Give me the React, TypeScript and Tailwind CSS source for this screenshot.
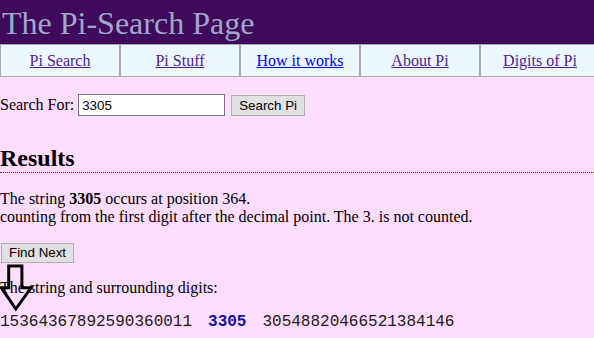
import React from 'react';

const navItems = [
  { label: 'Pi Search', visited: true },
  { label: 'Pi Stuff', visited: true },
  { label: 'How it works', visited: false },
  { label: 'About Pi', visited: true },
  { label: 'Digits of Pi', visited: true },
];

const DownArrow: React.FC = () => (
  <svg
    className="absolute left-0 top-[263px]"
    width="34"
    height="52"
    viewBox="0 0 34 52"
    fill="none"
    stroke="#000"
    strokeWidth="3"
    strokeLinejoin="miter"
  >
    <polygon points="8.7,3 21.9,3 21.9,24.8 31,24.8 15.8,46 1.4,24.8 8.7,24.8" />
  </svg>
);

const App: React.FC = () => {
  return (
    <div className="relative min-h-screen w-full overflow-hidden bg-[#ffddff] text-black font-['Liberation_Serif','Times_New_Roman',serif] text-[16px]">
      <header className="h-[44px] bg-[#3f0a5c] pl-[2px] text-[32px] leading-[46px] text-[#a0a8c8] whitespace-nowrap">
        The Pi-Search Page
      </header>

      <nav className="flex w-[600px]">
        {navItems.map((item) => (
          <div
            key={item.label}
            className="flex h-[33px] w-[120px] shrink-0 items-center justify-center border border-[#a9a9a9] bg-[#ebf8ff]"
          >
            <a
              href="#"
              className={`underline leading-[18px] ${item.visited ? 'text-[#551a8b]' : 'text-[#0000ee]'}`}
            >
              {item.label}
            </a>
          </div>
        ))}
      </nav>

      <div className="mt-[16px] flex h-[24px] items-center">
        <span className="leading-[18px]">Search For:</span>
        <input
          type="text"
          defaultValue="3305"
          className="ml-[4px] h-[22px] w-[147px] border border-[#767676] bg-white px-[3px] font-['Liberation_Sans',Arial,sans-serif] text-[13.33px] text-black outline-none"
        />
        <button className="ml-[6px] h-[21px] border border-[#adadad] bg-[#e1e1e1] px-[7px] font-['Liberation_Sans',Arial,sans-serif] text-[13.33px] leading-[17px] text-black">
          Search Pi
        </button>
      </div>

      <h2 className="mt-[27px] border-b border-dotted border-[#cc0000] text-[24px] font-bold leading-[28px]">
        Results
      </h2>

      <p className="mt-[17px] leading-[18px]">
        The string <b>3305</b> occurs at position 364.
        <br />
        counting from the first digit after the decimal point. The 3. is not counted.
      </p>

      <button className="ml-[1px] mt-[17px] block h-[20px] border border-[#adadad] bg-[#e1e1e1] px-[7px] font-['Liberation_Sans',Arial,sans-serif] text-[13.33px] leading-[16px] text-black">
        Find Next
      </button>

      <p className="mt-[16px] leading-[18px]">The string and surrounding digits:</p>

      <div className="mt-[16px] whitespace-nowrap font-['Liberation_Mono','Courier_New',monospace] text-[16px] leading-[18px] text-[#1a1a1a]">
        <span>15364367892590360011</span>
        <span className="mx-[16px] font-bold text-[#1010a0]">3305</span>
        <span>30548820466521384146</span>
      </div>

      <DownArrow />
    </div>
  );
};

export default App;
